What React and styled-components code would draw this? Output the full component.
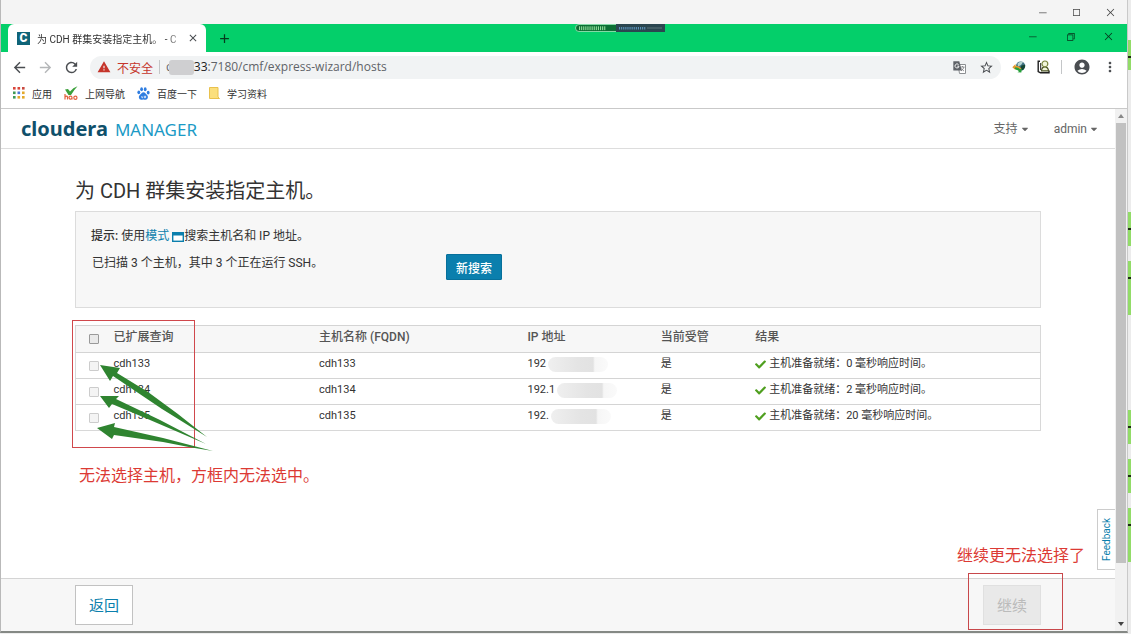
import React from "react";
import styled, { createGlobalStyle } from "styled-components";
import {
  MdAccountCircle,
  MdAdd,
  MdArrowBack,
  MdArrowForward,
  MdClose,
  MdMoreVert,
  MdRefresh,
  MdStarBorder,
  MdWarning,
} from "react-icons/md";
import {
  VscChromeClose,
  VscChromeMaximize,
  VscChromeMinimize,
  VscChromeRestore,
} from "react-icons/vsc";
import { FaCaretDown, FaCheck } from "react-icons/fa";

const hosts = [
  { name: "cdh133", ip: "192", delay: 0 },
  { name: "cdh134", ip: "192.1", delay: 2 },
  { name: "cdh135", ip: "192.", delay: 20 },
];

// coloured pieces of the window that lies behind
const behind = [
  { space: 40, height: 30 },
  { space: 142, height: 34 },
  { space: 15, height: 54 },
  { space: 95, height: 34 },
  { space: 15, height: 34 },
  { space: 15, height: 54 },
];

function AppsIcon() {
  const colors = [
    "#d9453a", "#d9453a", "#c94a3f",
    "#3f9a57", "#4a78d6", "#e3a92b",
    "#3f9a57", "#e3a92b", "#e3a92b",
  ];
  return (
    <svg width="12" height="12" viewBox="0 0 12 12" aria-hidden="true">
      {colors.map((c, i) => (
        <rect key={i} x={(i % 3) * 4.5} y={Math.floor(i / 3) * 4.5} width="2.6" height="2.6" fill={c} />
      ))}
    </svg>
  );
}

function HaoIcon() {
  return (
    <svg width="14" height="14" viewBox="0 0 14 14" aria-hidden="true">
      <path d="M1 3.5 4 3l2 2.500Q9 1.500 13.500.3 10 4 7 9L4.500 9Z" fill="#3aa03a" />
      <path
        d="M1 8v5.500M1 11q2-1.800 2.500 0v2.500M8 11.500a1.500 1.500 0 1 0-3 .3 1.500 1.500 0 0 0 3-.3v2M13 11.700a1.600 1.600 0 1 0-3.200 0 1.600 1.600 0 0 0 3.200 0"
        fill="none"
        stroke="#e2603c"
        strokeWidth="1.200"
      />
    </svg>
  );
}

function PawIcon() {
  return (
    <svg width="13" height="13" viewBox="0 0 13 13" aria-hidden="true" fill="#2f7de0">
      <ellipse cx="1.800" cy="5.300" rx="1.400" ry="1.900" />
      <ellipse cx="4.600" cy="2.200" rx="1.400" ry="2" />
      <ellipse cx="8.200" cy="2.200" rx="1.400" ry="2" />
      <ellipse cx="11.200" cy="5.600" rx="1.400" ry="1.900" />
      <path d="M6.500 5.200c1.700 0 2.200 1.600 3.300 2.600 2 1.700 1.200 4.900-1.300 4.900-1 0-1.300-.3-2.100-.3s-1.100.3-2 .3c-2.700 0-3.400-3.200-1.400-4.900C4.200 6.800 4.800 5.200 6.500 5.200Z" />
      <path d="M4.900 9v1.700h1M7.300 8.800v1.900h1.300V8.800" fill="none" stroke="#fff" strokeWidth=".8" />
    </svg>
  );
}

function FolderIcon() {
  return (
    <svg width="11" height="12" viewBox="0 0 11 12" aria-hidden="true">
      <path d="M.5.500h8.500v9.500l1.500 1.500H.500Z" fill="#fbdf7c" stroke="#e9c14d" />
    </svg>
  );
}

function TranslateIcon() {
  return (
    <svg width="13" height="13" viewBox="0 0 13 13" aria-hidden="true">
      <path d="M5 3.500h7.500v9H6.500Z" fill="#fff" stroke="#8c8f92" />
      <path d="M7.500 6h4M9.500 5v1M11 6q-.8 2.500-3 4M8.500 7.500q.8 1.500 2.500 2.500" fill="none" stroke="#77797c" strokeWidth=".8" />
      <path d="M.3.300h6L8.800 9.500H.300Z" fill="#5f6368" />
      <path d="M5.600 3.700A2 2 0 1 0 6 5.200H4.300" fill="none" stroke="#fff" strokeWidth=".9" />
    </svg>
  );
}

function GlobeIcon() {
  return (
    <svg width="14" height="12" viewBox="0 0 14 12" aria-hidden="true">
      <circle cx="8.600" cy="5" r="4.600" fill="#3f7183" />
      <path d="M5.500 2.500Q8-.3 11 1.200L9 4 6 5.500Z" fill="#b9d6d2" />
      <path d="M9.500 4.500l3.700-.8Q13.500 7.500 10 9.400L8 7.500Z" fill="#174634" />
      <path d="M3.500 3 .3 6.200 3.500 9V7.300Q6 7.200 7 9l2.500-1.500Q7.500 4.800 3.500 4.700Z" fill="#e39a2d" />
      <path d="M2.500 7.300 4 8.800q2 .2 3 1.500L5.500 11.300 9.300 11.500 10 7.500 8.500 8.600Q6.500 6.300 3.500 6.300Z" fill="#27a03a" />
    </svg>
  );
}

function PersonPageIcon() {
  return (
    <svg width="13" height="14" viewBox="0 0 13 14" aria-hidden="true">
      <path d="M3 1.200H1.200v10.300L3.500 12.800H12v-2.300" fill="none" stroke="#1f1f1f" strokeWidth="1.400" />
      <path d="M3.700 3v7" stroke="#1f1f1f" />
      <path d="M4.500 10.800q.2-3.600 3.200-4.200 3.600.6 3.800 4.200Z" fill="#f3f7dc" stroke="#4c5426" strokeWidth="1.200" />
      <circle cx="7.900" cy="3.900" r="2.900" fill="#f3f7dc" stroke="#7b8640" strokeWidth="1.200" />
    </svg>
  );
}

function PopupIcon() {
  return (
    <svg width="12" height="10" viewBox="0 0 12 10" aria-hidden="true">
      <rect x=".7" y=".7" width="10.600" height="8.600" fill="#fff" stroke="#0b7fad" strokeWidth="1.400" />
      <rect x="0" y="0" width="12" height="3.500" fill="#0b7fad" />
    </svg>
  );
}

function SignalWidget() {
  const ticks = Array.from({ length: 13 });
  return (
    <svg width="90" height="9" viewBox="0 0 90 9" aria-hidden="true">
      <path d="M4 .5h38v7H4Q.5 7.500.5 4T4 .5Z" fill="#0c6e34" stroke="#a5e8bd" strokeWidth=".8" />
      {ticks.map((_, i) => (
        <rect key={i} x={4 + i * 2.1} y="2.300" width="1.100" height="3.800" fill="#8fdc9a" />
      ))}
      <rect x="41" y="0" width="49" height="8" fill="#2b4650" />
      {ticks.map((_, i) => (
        <rect key={i} x={44 + i * 2.1} y="3" width="1.100" height="2.500" fill="#5c93bb" />
      ))}
      <path d="M72 4h15" stroke="#5d747b" />
    </svg>
  );
}

function Arrows() {
  return (
    <svg width="138" height="127" viewBox="0 0 138 127" aria-hidden="true" fill="#2f8430">
      <path d="M25 40 45 43 42 48 73 67Q104 89 132 112Q108 97 87 84L38 51 35 56Z" />
      <path d="M25 71 44 71 41 74 85 95 131 119Q103 107 75 95L37 79 34 83Z" />
      <path d="M22 103 40 98 39 102 88 113 138 126Q112 122 88 117L39 110 37 114Z" />
    </svg>
  );
}

function BrowserChrome() {
  return (
    <>
      <TitleBar>
        <WindowButton aria-label="最小化"><VscChromeMinimize /></WindowButton>
        <WindowButton aria-label="最大化"><VscChromeMaximize /></WindowButton>
        <WindowButton aria-label="关闭"><VscChromeClose /></WindowButton>
      </TitleBar>
      <TabStrip>
        <Tab>
          <Favicon>C</Favicon>
          <TabTitle>为 CDH 群集安装指定主机。 - C</TabTitle>
          <IconButton aria-label="关闭标签页" $size={12}><MdClose /></IconButton>
        </Tab>
        <NewTab aria-label="新标签页" $size={15}><MdAdd /></NewTab>
        <Widget><SignalWidget /></Widget>
        <TabControls>
          <WindowButton aria-label="最小化" $wide><VscChromeMinimize /></WindowButton>
          <WindowButton aria-label="还原" $wide><VscChromeRestore /></WindowButton>
          <WindowButton aria-label="关闭" $wide><VscChromeClose /></WindowButton>
        </TabControls>
      </TabStrip>
      <Toolbar>
        <NavButtons>
          <IconButton aria-label="后退" $size={17}><MdArrowBack /></IconButton>
          <IconButton aria-label="前进" $size={17} $muted><MdArrowForward /></IconButton>
          <IconButton aria-label="刷新" $size={17}><MdRefresh /></IconButton>
        </NavButtons>
        <Omnibox>
          <MdWarning size={14} color="#c5352b" />
          <Unsafe>不安全</Unsafe>
          <Divider />
          <Url>
            c<UrlMask /><b>33</b>:7180/cmf/express-wizard/hosts
          </Url>
          <IconButton aria-label="翻译" $size={13}><TranslateIcon /></IconButton>
          <IconButton aria-label="收藏" $size={15}><MdStarBorder /></IconButton>
        </Omnibox>
        <Extensions>
          <IconButton aria-label="下载" $size={14}><GlobeIcon /></IconButton>
          <IconButton aria-label="扩展" $size={13}><PersonPageIcon /></IconButton>
          <Divider />
          <IconButton aria-label="用户" $size={18}><MdAccountCircle /></IconButton>
          <IconButton aria-label="菜单" $size={16}><MdMoreVert /></IconButton>
        </Extensions>
      </Toolbar>
      <Bookmarks>
        <Bookmark href="#"><AppsIcon />应用</Bookmark>
        <Bookmark href="#"><HaoIcon />上网导航</Bookmark>
        <Bookmark href="#"><PawIcon />百度一下</Bookmark>
        <Bookmark href="#"><FolderIcon />学习资料</Bookmark>
      </Bookmarks>
    </>
  );
}

function HostTable() {
  return (
    <TableWrap>
      <Table>
        <colgroup>
          <Column $width="38px" />
          <Column $width="21.3%" />
          <Column $width="21.6%" />
          <Column $width="13.8%" />
          <Column $width="9.8%" />
          <Column />
        </colgroup>
        <thead>
          <tr>
            <th><Checkbox type="checkbox" aria-label="全选" /></th>
            <th>已扩展查询</th>
            <th>主机名称 (FQDN)</th>
            <th>IP 地址</th>
            <th>当前受管</th>
            <th>结果</th>
          </tr>
        </thead>
        <tbody>
          {hosts.map((host) => (
            <tr key={host.name}>
              <td><Checkbox type="checkbox" disabled aria-label={host.name} /></td>
              <td>{host.name}</td>
              <td>{host.name}</td>
              <td>
                <IpCell>{host.ip}<IpMask /></IpCell>
              </td>
              <td>是</td>
              <td>
                <Result>
                  <FaCheck size={11} color="#4f9f1f" />
                  主机准备就绪：{host.delay} 毫秒响应时间。
                </Result>
              </td>
            </tr>
          ))}
        </tbody>
      </Table>
      <TableMark />
      <ArrowMark><Arrows /></ArrowMark>
    </TableWrap>
  );
}

function App() {
  return (
    <Desktop>
      <GlobalStyle />
      <Window>
        <BrowserChrome />
        <Viewport>
          <Page>
            <Header>
              <Brand href="#">
                <strong>cloudera</strong>
                <span>MANAGER</span>
              </Brand>
              <Menu>
                <MenuButton>支持 <FaCaretDown /></MenuButton>
                <MenuButton>admin <FaCaretDown /></MenuButton>
              </Menu>
            </Header>
            <Main>
              <Title>为 CDH 群集安装指定主机。</Title>
              <Panel>
                <Hint>
                  <b>提示:</b> 使用<a href="#">模式 <PopupIcon /></a>搜索主机名和 IP 地址。
                </Hint>
                <ScanRow>
                  <p>已扫描 3 个主机，其中 3 个正在运行 SSH。</p>
                  <SearchButton>新搜索</SearchButton>
                </ScanRow>
              </Panel>
              <HostTable />
              <Note>无法选择主机，方框内无法选中。</Note>
            </Main>
            <Feedback>Feedback</Feedback>
            <Footer>
              <FooterButton>返回</FooterButton>
              <FooterButton disabled>继续</FooterButton>
              <FooterNote>继续更无法选择了</FooterNote>
              <FooterMark />
            </Footer>
          </Page>
          <Scrollbar>
            <ScrollArrow />
            <ScrollTrack><ScrollThumb /></ScrollTrack>
            <ScrollArrow $down />
          </Scrollbar>
        </Viewport>
      </Window>
      <Behind>
        {behind.map((item, i) => (
          <BehindBlock key={i} $space={item.space} $height={item.height} />
        ))}
      </Behind>
    </Desktop>
  );
}

export default App;

const GlobalStyle = createGlobalStyle`
  * {
    box-sizing: border-box;
  }
  body {
    margin: 0;
    font-family: Roboto, "Noto Sans CJK SC", sans-serif;
    font-size: 12px;
    color: #333;
    background: #fff;
  }
  button {
    font-family: inherit;
    padding: 0;
    border: 0;
    background: none;
  }
  h1, p {
    margin: 0;
    font-weight: 400;
  }
  a {
    text-decoration: none;
  }
`;

const Desktop = styled.div`
  display: flex;
  min-height: 100vh;
  padding-bottom: 1px;
  background: #eee;
`;

const Window = styled.div`
  flex: 1;
  min-width: 0;
  display: flex;
  flex-direction: column;
  background: #fff;
  border-left: 1px solid #b9b9b9;
  border-right: 1px solid #c9c9c9;
  border-bottom: 2px solid #858985;
`;

const TitleBar = styled.div`
  display: flex;
  justify-content: flex-end;
  height: 24px;
  background: #f4f4f4;
`;

const WindowButton = styled.button`
  display: flex;
  align-items: center;
  justify-content: center;
  width: ${(p) => (p.$wide ? 38 : 34)}px;
  height: 24px;
  font-size: 11px;
  color: ${(p) => (p.$wide ? "#08331c" : "#444")};
`;

const TabStrip = styled.div`
  position: relative;
  display: flex;
  align-items: center;
  height: 28px;
  padding-left: 7px;
  background: #04cf6a;
`;

const Tab = styled.div`
  display: flex;
  align-items: center;
  width: 198px;
  height: 28px;
  padding: 0 7px 0 9px;
  background: #fff;
  border-radius: 6px 6px 0 0;
`;

const Favicon = styled.span`
  width: 13px;
  height: 13px;
  margin-right: 7px;
  background: #0f6478;
  color: #fff;
  font: 900 12px/13px Roboto, sans-serif;
  text-align: center;
`;

const TabTitle = styled.span`
  flex: 1;
  overflow: hidden;
  font-size: 10px;
  white-space: nowrap;
  mask-image: linear-gradient(to right, #000 85%, transparent);
`;

const IconButton = styled.button`
  display: flex;
  align-items: center;
  justify-content: center;
  font-size: ${(p) => p.$size}px;
  color: ${(p) => (p.$muted ? "#b4b6b8" : "#4a4d51")};
`;

const NewTab = styled(IconButton)`
  margin-left: 11px;
  color: #063a1e;
`;

const Widget = styled.div`
  position: absolute;
  top: 0;
  left: 51%;
  line-height: 0;
`;

const TabControls = styled.div`
  display: flex;
  align-self: flex-start;
  margin-left: auto;
`;

const Toolbar = styled.div`
  display: flex;
  align-items: center;
  height: 30px;
  padding: 0 9px 0 10px;
`;

const NavButtons = styled.div`
  display: flex;
  gap: 9px;
  margin-right: 10px;
`;

const Omnibox = styled.div`
  flex: 1;
  display: flex;
  align-items: center;
  gap: 6px;
  height: 23px;
  padding: 0 7px;
  background: #f1f3f4;
  border-radius: 12px;

  button {
    margin-left: 7px;
  }
`;

const Unsafe = styled.span`
  font-size: 12px;
  color: #c5352b;
`;

const Divider = styled.span`
  width: 1px;
  height: 14px;
  background: #c4c6c8;
`;

const Url = styled.span`
  flex: 1;
  display: flex;
  align-items: center;
  font: 12px/20px "Open Sans", "Noto Sans", sans-serif;
  color: #5f6368;

  b {
    font-weight: 400;
    color: #222;
  }
`;

const UrlMask = styled.span`
  width: 25px;
  height: 15px;
  margin-left: -3px;
  background: #cfcfd1;
  border-radius: 3px;
`;

const Extensions = styled.div`
  display: flex;
  align-items: center;
  gap: 11px;
  margin-left: 11px;
`;

const Bookmarks = styled.nav`
  display: flex;
  align-items: center;
  gap: 12px;
  height: 27px;
  padding: 0 12px 4px;
  border-bottom: 1px solid #c9c9c9;
`;

const Bookmark = styled.a`
  display: flex;
  align-items: center;
  gap: 7px;
  font-size: 10px;
  color: #333;
`;

const Viewport = styled.div`
  flex: 1;
  display: flex;
`;

const Page = styled.div`
  position: relative;
  flex: 1;
  min-width: 0;
  display: flex;
  flex-direction: column;
`;

const Header = styled.header`
  display: flex;
  align-items: center;
  justify-content: space-between;
  height: 40px;
  padding: 0 16px 0 20px;
  border-bottom: 1px solid #ddd;
`;

const Brand = styled.a`
  display: flex;
  align-items: baseline;
  gap: 7px;
  font-family: "Noto Sans", sans-serif;
  color: #10506b;

  strong {
    font-size: 20px;
  }
  span {
    font-size: 17px;
    color: #1b9ac6;
  }
`;

const Menu = styled.div`
  display: flex;
  gap: 24px;
`;

const MenuButton = styled.button`
  display: flex;
  align-items: center;
  gap: 2px;
  font-size: 12px;
  line-height: 16px;
  color: #666;

  svg {
    font-size: 10px;
  }
`;

const Main = styled.main`
  flex: 1;
  padding: 28px 74px;
`;

const Title = styled.h1`
  margin-bottom: 6px;
  font-size: 20px;
  line-height: 28px;
`;

const Panel = styled.section`
  padding: 15px 15px 27px;
  background: #f7f7f7;
  border: 1px solid #dcdcdc;
`;

const Hint = styled.p`
  margin-bottom: 9px;
  line-height: 18px;

  b {
    font-weight: 500;
  }
  a {
    color: #0b7fad;
  }
  svg {
    vertical-align: -2px;
  }
`;

const ScanRow = styled.div`
  display: flex;
  align-items: flex-start;
  line-height: 18px;

  p {
    flex: 0 0 38%;
    padding-left: 1px;
  }
`;

const SearchButton = styled.button`
  width: 56px;
  height: 26px;
  background: #0b7fad;
  border: 1px solid #07709b;
  border-radius: 1px;
  color: #fff;
  font-size: 12px;
  font-weight: 500;
`;

const TableWrap = styled.div`
  position: relative;
  margin-top: 17px;
`;

const Table = styled.table`
  width: 100%;
  table-layout: fixed;
  border-collapse: collapse;
  border: 1px solid #d8d8d8;

  th,
  td {
    height: 26px;
    padding: 0;
    line-height: 22px;
    text-align: left;
    vertical-align: top;
    white-space: nowrap;
    border-top: 1px solid #d4d4d4;
  }
  th {
    height: 27px;
    background: #f7f7f7;
    color: #555;
    font-size: 12px;
    font-weight: 500;
  }
  td {
    font-size: 11px;
  }
  th:first-child,
  td:first-child {
    padding-left: 13px;
    vertical-align: middle;
  }
`;

const Column = styled.col`
  width: ${(p) => p.$width || "auto"};
`;

const Checkbox = styled.input`
  appearance: none;
  display: block;
  width: 10px;
  height: 10px;
  margin: 0;
  background: #e9e9e9;
  border: 1px solid #999;
  border-radius: 1px;

  &:disabled {
    background: #f4f4f4;
    border-color: #ccc;
  }
`;

const IpCell = styled.span`
  display: flex;
  align-items: center;
`;

const IpMask = styled.span`
  width: 60px;
  height: 15px;
  margin-left: 2px;
  background: linear-gradient(to right, #efefef, #e4e4e4 50%, #e2e2e2 75%, #f6f6f6 78%, #fafafa);
  border-radius: 8px;
`;

const Result = styled.span`
  display: flex;
  align-items: center;
  gap: 3px;
`;

const TableMark = styled.div`
  position: absolute;
  top: -5px;
  left: -3px;
  width: 123px;
  height: 128px;
  border: 1px solid #d0484c;
`;

const ArrowMark = styled.div`
  position: absolute;
  top: 0;
  left: 0;
  line-height: 0;
  pointer-events: none;
`;

const Note = styled.p`
  margin-top: 33px;
  padding-left: 4px;
  font-size: 16px;
  line-height: 24px;
  color: #dc3a34;
`;

const Feedback = styled.button`
  position: absolute;
  right: 0;
  bottom: 61px;
  width: 18px;
  height: 61px;
  background: #fff;
  border: 1px solid #ccc;
  border-right: 0;
  color: #0b7fad;
  font-size: 10px;
  writing-mode: sideways-lr;
`;

const Footer = styled.footer`
  position: relative;
  display: flex;
  justify-content: space-between;
  padding: 6px 74px;
  background: #f7f7f7;
  border-top: 1px solid #d4d4d4;
`;

const FooterButton = styled.button`
  width: 58px;
  height: 40px;
  padding-bottom: 2px;
  background: #fff;
  border: 1px solid #c2c2c2;
  color: #0b7fad;
  font-size: 15px;

  &:disabled {
    background: #e9e9e9;
    border-color: #e0e0e0;
    color: #bbb;
  }
`;

const FooterNote = styled(Note)`
  position: absolute;
  right: 30px;
  bottom: 100%;
  margin: 0 0 11px;
  padding: 0;
`;

const FooterMark = styled.div`
  position: absolute;
  top: -6px;
  right: 52px;
  width: 95px;
  height: 57px;
  border: 1px solid #c8484b;
`;

const Scrollbar = styled.div`
  display: flex;
  flex-direction: column;
  width: 12px;
  background: #f1f1f1;
`;

const ScrollArrow = styled.div`
  display: flex;
  align-items: center;
  justify-content: center;
  height: 14px;

  &::after {
    content: "";
    border: 3px solid transparent;
    border-top-width: ${(p) => (p.$down ? 4 : 0)}px;
    border-bottom-width: ${(p) => (p.$down ? 0 : 4)}px;
    border-top-color: #444;
    border-bottom-color: #888;
  }
`;

const ScrollTrack = styled.div`
  flex: 1;
  display: flex;
  flex-direction: column;
`;

const ScrollThumb = styled.div`
  flex: 0 0 89%;
  margin: 0 1px;
  background: #c1c1c1;
`;

const Behind = styled.div`
  width: 3px;
  background: #ececec;
`;

const BehindBlock = styled.div`
  height: ${(p) => p.$height}px;
  background: #92dc68;
  border-top: ${(p) => p.$space}px solid #ececec;
  box-sizing: content-box;

  &::before {
    content: "";
    display: block;
    height: 16px;
    border-bottom: 2px solid #1c2b12;
  }
`;
